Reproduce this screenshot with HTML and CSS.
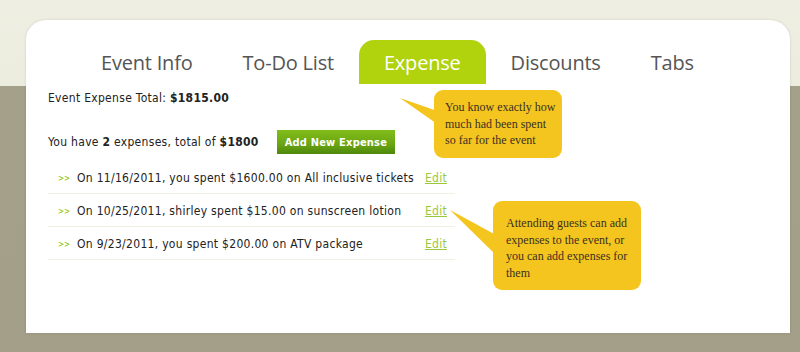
FILE: index.html
```html
<!DOCTYPE html>
<html lang="en">
<head>
    <meta charset="UTF-8">
    <title>Event Expense</title>
    <link rel="stylesheet" href="styles.css">
</head>
<body>
    <div class="event-card">
        <ul class="tabs">
            <li>Event Info</li>
            <li>To-Do List</li>
            <li class="active">Expense</li>
            <li>Discounts</li>
            <li>Tabs</li>
        </ul>

        <div class="expense-panel">
            <p class="total">Event Expense Total: <b>$1815.00</b></p>

            <div class="summary">
                <span>You have <b>2</b> expenses, total of <b>$1800</b></span>
                <button class="add-btn">Add New Expense</button>
            </div>

            <ul class="expense-list">
                <li><span class="bullet">&gt;&gt;</span><span class="desc">On 11/16/2011, you spent $1600.00 on All inclusive tickets</span><a href="#">Edit</a></li>
                <li><span class="bullet">&gt;&gt;</span><span class="desc">On 10/25/2011, shirley spent $15.00 on sunscreen lotion</span><a href="#">Edit</a></li>
                <li><span class="bullet">&gt;&gt;</span><span class="desc">On 9/23/2011, you spent $200.00 on ATV package</span><a href="#">Edit</a></li>
            </ul>
        </div>

        <!-- callouts -->
        <div class="callout callout-total">
            <svg class="pointer" width="40" height="30" viewBox="0 0 40 30"><polygon points="0,0 40,14 40,28" fill="#f5c51f"/></svg>
            You know exactly how much had been spent so far for the event
        </div>
        <div class="callout callout-edit">
            <svg class="pointer" width="46" height="50" viewBox="0 0 46 50"><polygon points="0,0 46,25 46,45" fill="#f5c51f"/></svg>
            Attending guests can add expenses to the event, or you can add expenses for them
        </div>
    </div>
</body>
</html>
```

FILE: styles.css
```css
body {
    margin: 0;
    height: 352px;
    overflow: hidden;
    background: linear-gradient(#eeeee2 0, #eceddf 86px, #a4a08a 86px, #a39f89 100%);
    font-family: "DejaVu Sans", Tahoma, sans-serif;
    font-stretch: condensed;
    font-size: 12px;
    letter-spacing: 0.3px;
    color: #222;
}
.event-card {
    position: relative;
    margin: 20px 10px 0 26px;
    height: 313px;
    background: #fff;
    border-radius: 20px 20px 0 0;
    box-shadow: 0 0 3px rgba(0, 0, 0, 0.12);
}
.tabs {
    display: flex;
    list-style: none;
    margin: 0;
    padding: 20px 0 0 50px;
    font-family: "Open Sans", sans-serif;
    font-stretch: normal;
    font-size: 20px;
    letter-spacing: -0.2px;
    color: #555;
}
.tabs li {
    height: 44px;
    line-height: 46px;
    padding: 0 25px;
}
.tabs li.active {
    background: #b0d30e;
    color: #fff;
    border-radius: 15px 15px 0 0;
}
.expense-panel {
    padding: 6px 0 0 22px;
    width: 407px;
}
.total {
    margin: 0;
    line-height: 16px;
}
.summary {
    display: flex;
    align-items: center;
    gap: 18px;
    margin-top: 24px;
}
.add-btn {
    height: 24px;
    padding: 0 8px;
    border: none;
    background: linear-gradient(#80bd1a, #6aa513 60%, #4d870b);
    color: #fff;
    font-family: "DejaVu Sans", Tahoma, sans-serif;
    font-stretch: condensed;
    font-size: 11px;
    font-weight: bold;
    letter-spacing: 0.2px;
}
.expense-list {
    list-style: none;
    margin: 7px 0 0;
    padding: 0;
}
.expense-list li {
    display: flex;
    align-items: center;
    height: 33px;
    padding: 2px 8px 0 10px;
    box-sizing: border-box;
    border-bottom: 1px solid #efefe2;
    white-space: nowrap;
}
.bullet {
    color: #9cc92c;
    font-size: 8px;
    font-weight: bold;
    letter-spacing: 0;
    width: 19px;
}
.desc {
    flex: 1;
}
.expense-list a {
    color: #9cc93c;
    letter-spacing: 0.3px;
}
.callout {
    position: absolute;
    background: #f5c51f;
    border-radius: 9px;
    font-family: "Liberation Serif", Georgia, serif;
    font-stretch: normal;
    font-size: 12px;
    letter-spacing: 0;
    line-height: 16.5px;
    color: #3a3020;
    box-sizing: border-box;
}
.callout .pointer {
    position: absolute;
}
.callout-total {
    left: 408px;
    top: 70px;
    width: 128px;
    height: 68px;
    padding: 9px 3px 0 11px;
}
.callout-total .pointer {
    left: -34px;
    top: 8px;
}
.callout-edit {
    left: 467px;
    top: 181px;
    width: 148px;
    height: 89px;
    padding: 14px 10px 0 13px;
}
.callout-edit .pointer {
    left: -43px;
    top: 9px;
}
```
